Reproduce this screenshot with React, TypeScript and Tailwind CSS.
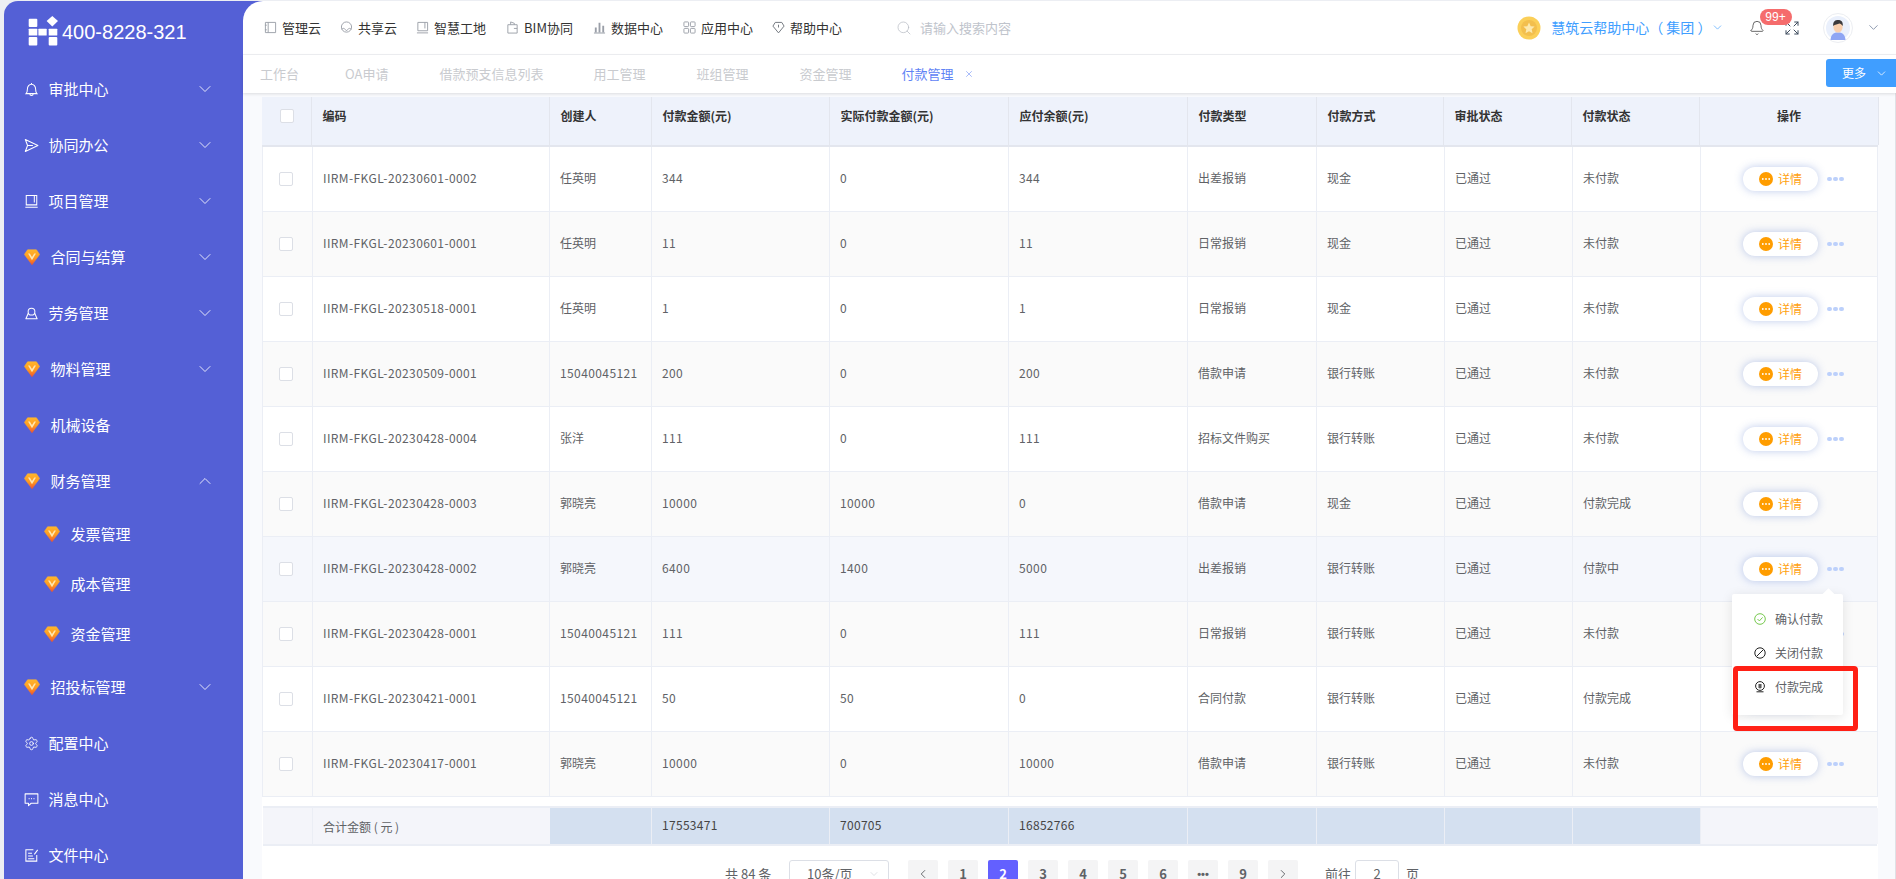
import React from "react";
import { ChevronDown, ChevronUp, ChevronLeft, ChevronRight, Search, Expand, Bell, Settings, X } from "lucide-react";

const BLUE = "bg-[#5460d6]";

function Gem() {
  return (
    <svg width="16" height="16" viewBox="0 0 16 16" className="shrink-0">
      <defs>
        <linearGradient id="gemg" x1="0" y1="0" x2="0" y2="1">
          <stop offset="0" stopColor="#ffb52b" />
          <stop offset="0.55" stopColor="#ff9a20" />
          <stop offset="1" stopColor="#f0542a" />
        </linearGradient>
      </defs>
      <path d="M3.6 .8 H12.4 L15.6 5.4 L8 15.8 L.4 5.4 Z" fill="url(#gemg)" stroke="url(#gemg)" strokeWidth="0.6" strokeLinejoin="round" />
      <path d="M4 4.4 L8 11.2 L12 4.4 L10.2 4.4 L8 8 L5.8 4.4 Z" fill="#ffe6b0" />
    </svg>
  );
}

function Logo() {
  return (
    <svg width="30" height="30" viewBox="0 0 30 30" className="shrink-0" fill="#fff">
      <rect x="0.7" y="2.7" width="8.6" height="8.3" rx="1" />
      <rect x="0.7" y="12.7" width="8.6" height="6.8" rx="0.6" />
      <rect x="0.7" y="21" width="8.6" height="8.4" rx="1" />
      <rect x="10.4" y="12.7" width="8.3" height="6.8" rx="0.6" />
      <rect x="20.7" y="12.7" width="8.6" height="6.8" rx="0.6" />
      <rect x="20.7" y="21" width="8.6" height="8.4" rx="1" />
      <path d="M24.3 0 L30 5 L24.3 10.4 L18.6 5 Z" />
    </svg>
  );
}

const si = { width: 15, height: 15, viewBox: "0 0 16 16", fill: "none", stroke: "#fff", strokeWidth: 1.1, className: "shrink-0" } as const;

const BellI = () => (
  <svg {...si}><path d="M2.2 12.4 H13.8 C12.6 11 12.4 9.8 12.4 7.6 C12.4 4.6 10.4 2.4 8 2.4 C5.6 2.4 3.6 4.6 3.6 7.6 C3.6 9.8 3.4 11 2.2 12.4 Z M8 1 V2.4 M6.2 12.6 C6.2 15 9.8 15 9.8 12.6" /></svg>
);
const SendI = () => (
  <svg {...si}><path d="M1.4 1.6 L14.8 8 L1.4 14.4 L3.8 8 Z M3.8 8 H9.5" strokeLinejoin="round" /></svg>
);
const BookI = () => (
  <svg {...si}><path d="M2.4 1.6 H13.6 V11.6 H2.4 Z M11 1.6 V9 M1.4 14.2 H14.6" /></svg>
);
const UserI = () => (
  <svg {...si}><circle cx="8" cy="6" r="3.6" /><path d="M4.6 7.8 L2 13.6 H14 L11.4 7.8" strokeLinejoin="round" /></svg>
);
const ChatI = () => (
  <svg {...si}><path d="M1.2 2 H14.8 V12 H7.6 L4.8 14.6 V12 H1.2 Z" strokeLinejoin="round" /><path d="M5 7 H5.9 M7.6 7 H8.5 M10.2 7 H11.1" strokeWidth="1.3" /></svg>
);
const EditI = () => (
  <svg {...si}><path d="M13.6 7.5 V14 H2 V1.8 H10 M4.4 5.6 H8.5 M4.4 8.6 H9.5 M4.4 11.4 H11 M11 6.8 L14.6 2" /></svg>
);

type MI = { label: string; icon: React.ReactNode; arrow?: "down" | "up"; sub?: boolean };

const menu: MI[] = [
  { label: "审批中心", icon: <BellI />, arrow: "down" },
  { label: "协同办公", icon: <SendI />, arrow: "down" },
  { label: "项目管理", icon: <BookI />, arrow: "down" },
  { label: "合同与结算", icon: <Gem />, arrow: "down" },
  { label: "劳务管理", icon: <UserI />, arrow: "down" },
  { label: "物料管理", icon: <Gem />, arrow: "down" },
  { label: "机械设备", icon: <Gem /> },
  { label: "财务管理", icon: <Gem />, arrow: "up" },
  { label: "发票管理", icon: <Gem />, sub: true },
  { label: "成本管理", icon: <Gem />, sub: true },
  { label: "资金管理", icon: <Gem />, sub: true },
  { label: "招投标管理", icon: <Gem />, arrow: "down" },
  { label: "配置中心", icon: <Settings size={15} strokeWidth={1.4} className="shrink-0 text-white" /> },
  { label: "消息中心", icon: <ChatI /> },
  { label: "文件中心", icon: <EditI /> },
];

function MenuItem({ m }: { m: MI }) {
  if (m.sub) {
    return (
      <div className="h-[50px] flex items-center pl-[39.5px] text-[15px] text-white">
        <Gem />
        <span className="ml-[11px]">{m.label}</span>
      </div>
    );
  }
  const isGem = m.icon && (m.icon as any).type === Gem;
  return (
    <div className="h-[56px] flex items-center pl-[19.5px] pr-[28px] text-[15px] text-white">
      <div className="w-[16px] flex justify-center">{m.icon}</div>
      <span className={isGem ? "ml-[11px]" : "ml-[9px]"}>{m.label}</span>
      <span className="ml-auto">
        {m.arrow === "down" && <ChevronDown size={20} strokeWidth={1} className="text-white" />}
        {m.arrow === "up" && <ChevronUp size={20} strokeWidth={1} className="text-white" />}
      </span>
    </div>
  );
}

const ni = { width: 13, height: 13, viewBox: "0 0 14 14", fill: "none", stroke: "#9a9fa8", strokeWidth: 1, className: "shrink-0" } as const;

const navs: { label: string; icon: React.ReactNode; ml: string }[] = [
  { label: "管理云", ml: "ml-[21px]", icon: <svg {...ni}><path d="M1.5 1.5 H12.5 V12.5 H1.5 Z M4.5 1.5 V12.5 M1 4.5 H3 M1 9.5 H3" /></svg> },
  { label: "共享云", ml: "ml-[19px]", icon: <svg {...ni}><circle cx="7" cy="6.5" r="5.5" /><path d="M2 9 C3 7 5 8 7 10.5 C9 8 11 7 12 9" /></svg> },
  { label: "智慧工地", ml: "ml-[19px]", icon: <svg {...ni}><path d="M2 1.5 H12.5 V10.5 H2 Z M9.6 1.5 V8 M1 12.8 H13" /></svg> },
  { label: "BIM协同", ml: "ml-[20px]", icon: <svg {...ni}><path d="M2 4 H12 V13 H2 Z M5 4 V1 L9 2.5 V4 M8.5 8 H12" /></svg> },
  { label: "数据中心", ml: "ml-[20px]", icon: <svg {...ni} fill="#9a9fa8" stroke="none"><path d="M2 7 H4 V12 H2 Z M6 2 H8 V12 H6 Z M10 5 H12 V12 H10 Z M1 12.5 H13 V13.4 H1 Z" /></svg> },
  { label: "应用中心", ml: "ml-[20px]", icon: <svg {...ni}><rect x="1" y="1" width="5" height="5" rx="0.8" /><rect x="8" y="1" width="5" height="5" rx="0.8" /><rect x="1" y="8" width="5" height="5" rx="0.8" /><rect x="8" y="8" width="5" height="5" rx="0.8" /></svg> },
  { label: "帮助中心", ml: "ml-[19px]", icon: <svg {...ni} stroke="#6b7078"><path d="M3.5 1.5 H10.5 L13 5.5 L7 12.8 L1 5.5 Z M7 4 L7 7" /></svg> },
];

const tabs = [
  { t: "工作台", ml: "ml-[17px]" },
  { t: "OA申请", ml: "ml-[46px]" },
  { t: "借款预支信息列表", ml: "ml-[51px]" },
  { t: "用工管理", ml: "ml-[50px]" },
  { t: "班组管理", ml: "ml-[51px]" },
  { t: "资金管理", ml: "ml-[51px]" },
];

const headW = "grid grid-cols-[50px_238px_102px_178px_179px_179px_129px_127px_128px_128px_179px]";
const bodyW = "grid grid-cols-[50px_237px_102px_178px_179px_179px_129px_128px_128px_128px_177px]";

const heads = ["编码", "创建人", "付款金额(元)", "实际付款金额(元)", "应付余额(元)", "付款类型", "付款方式", "审批状态", "付款状态"];

const rows = [
  ["IIRM-FKGL-20230601-0002", "任英明", "344", "0", "344", "出差报销", "现金", "已通过", "未付款", "1"],
  ["IIRM-FKGL-20230601-0001", "任英明", "11", "0", "11", "日常报销", "现金", "已通过", "未付款", "1"],
  ["IIRM-FKGL-20230518-0001", "任英明", "1", "0", "1", "日常报销", "现金", "已通过", "未付款", "1"],
  ["IIRM-FKGL-20230509-0001", "15040045121", "200", "0", "200", "借款申请", "银行转账", "已通过", "未付款", "1"],
  ["IIRM-FKGL-20230428-0004", "张洋", "111", "0", "111", "招标文件购买", "银行转账", "已通过", "未付款", "1"],
  ["IIRM-FKGL-20230428-0003", "郭晓亮", "10000", "10000", "0", "借款申请", "现金", "已通过", "付款完成", "0"],
  ["IIRM-FKGL-20230428-0002", "郭晓亮", "6400", "1400", "5000", "出差报销", "银行转账", "已通过", "付款中", "1"],
  ["IIRM-FKGL-20230428-0001", "15040045121", "111", "0", "111", "日常报销", "银行转账", "已通过", "未付款", "1"],
  ["IIRM-FKGL-20230421-0001", "15040045121", "50", "50", "0", "合同付款", "银行转账", "已通过", "付款完成", "0"],
  ["IIRM-FKGL-20230417-0001", "郭晓亮", "10000", "0", "10000", "借款申请", "银行转账", "已通过", "未付款", "1"],
];

const rowBg = ["bg-white", "bg-[#fafafa]", "bg-white", "bg-[#fafafa]", "bg-white", "bg-[#fafafa]", "bg-[#f5f7fc]", "bg-[#fafafa]", "bg-white", "bg-[#fafafa]"];

function Check() {
  return <span className="block w-[14px] h-[14px] rounded-[2px] border border-[#dcdfe6] bg-white" />;
}

function Dots() {
  return (
    <span className="flex gap-[1.5px] ml-[9px]">
      <i className="block w-[4.5px] h-[4.5px] rounded-full bg-[#bcd0fb]" />
      <i className="block w-[4.5px] h-[4.5px] rounded-full bg-[#bcd0fb]" />
      <i className="block w-[4.5px] h-[4.5px] rounded-full bg-[#bcd0fb]" />
    </span>
  );
}

function Detail() {
  return (
    <span className="flex items-center justify-center w-[75px] h-[24px] rounded-full bg-white shadow-[0_0_8px_rgba(70,105,200,0.35)] text-[12px] text-[#ff9f0f]">
      <svg width="14" height="14" viewBox="0 0 14 14" className="shrink-0">
        <circle cx="7" cy="7" r="7" fill="#ff9d00" />
        <circle cx="3.8" cy="7" r="0.9" fill="#fff" />
        <circle cx="7" cy="7" r="0.9" fill="#fff" />
        <circle cx="10.2" cy="7" r="0.9" fill="#fff" />
      </svg>
      <span className="ml-[5px]">详情</span>
    </span>
  );
}

const pages = ["1", "2", "3", "4", "5", "6", "•••", "9"];
const isLatin = (s: string) => /^[\x00-\x7f]+$/.test(s);

export default function App() {
  return (
    <div className="relative w-[1896px] h-[879px] overflow-hidden flex pt-px bg-[#eceef3] font-['Noto_Sans_CJK_SC','Noto_Sans',sans-serif]">
      {/* sidebar */}
      <aside className={`ml-[4px] w-[239px] shrink-0 rounded-tl-[14px] ${BLUE}`}>
        <div className="h-[60px] flex items-center pl-[24px]">
          <Logo />
          <span className="ml-[4px] mt-[2px] text-[20px] text-white font-['Liberation_Sans',sans-serif]">400-8228-321</span>
        </div>
        {menu.map((m) => (
          <MenuItem key={m.label} m={m} />
        ))}
      </aside>

      {/* main */}
      <div className="flex-1 min-w-0 flex flex-col">
        <div className={BLUE}>
          <header className="h-[54px] bg-white rounded-tl-[20px] border-b border-[#f0f1f4] flex items-center text-[13px] text-[#333]">
            {navs.map((n) => (
              <div key={n.label} className={`flex items-center ${n.ml}`}>
                {n.icon}
                <span className="ml-[5px]">{n.label}</span>
              </div>
            ))}
            <Search size={16} strokeWidth={1.1} className="ml-[54px] text-[#b8bcc4]" />
            <span className="ml-[8px] text-[#c0c4cc]">请输入搜索内容</span>
            <svg width="24" height="24" viewBox="0 0 24 24" className="ml-auto shrink-0">
              <circle cx="12" cy="12" r="11.5" fill="#fbcf58" />
              <circle cx="12" cy="12" r="8" fill="#f3bf4d" />
              <path d="M12 6.5 L13.7 10.2 L17.6 10.6 L14.7 13.2 L15.5 17.2 L12 15.2 L8.5 17.2 L9.3 13.2 L6.4 10.6 L10.3 10.2 Z" fill="#fde9ad" />
            </svg>
            <span className="ml-[10px] text-[14px] text-[#409eff]">慧筑云帮助中心（ 集团 ）</span>
            <ChevronDown size={13} strokeWidth={1.2} className="ml-[-1px] text-[#409eff]" />
            <Bell size={16} strokeWidth={1.1} className="ml-[25px] text-[#333]" />
            <span className="relative ml-[19px]">
              <Expand size={16} strokeWidth={1.5} className="text-[#3d4a5c]" />
              <span className="absolute left-[-24px] top-[-11px] w-[32px] h-[16px] rounded-full bg-[#f56c6c] text-white text-[12px] leading-[16px] text-center font-['Liberation_Sans',sans-serif]">99+</span>
            </span>
            <span className="ml-[23.5px] w-[30px] h-[30px] rounded-full border border-[#eceef2] bg-white flex items-center justify-center shrink-0">
              <svg width="24" height="24" viewBox="0 0 24 24">
                <circle cx="12" cy="12" r="12" fill="#eaf0fc" />
                <path d="M4.5 24 C5 18 8 16.5 12 16.5 C16 16.5 19 18 19.5 24 Z" fill="#8ea5f4" />
                <ellipse cx="12" cy="11" rx="4.6" ry="5.6" fill="#f9cfae" />
                <path d="M7.2 10 C6.8 5 9.5 4 12 4 C15 4 17.2 5.5 16.8 10 C15.5 8.5 14.5 8 13.5 7.6 C11.5 8.6 9 8.6 7.2 10 Z" fill="#3b3a3d" />
              </svg>
            </span>
            <ChevronDown size={15} strokeWidth={1.2} className="ml-[13px] mr-[15px] text-[#6a7a96]" />
          </header>
        </div>

        <nav className="relative z-10 h-[38px] bg-white shadow-[0_1px_3px_rgba(0,0,0,0.12)] flex items-center text-[13px] text-[#c9cbcf]">
          {tabs.map((t) => (
            <span key={t.t} className={`${t.ml} pb-[1px]`}>{t.t}</span>
          ))}
          <span className="ml-[50px] pb-[1px] text-[#5f83f5]">付款管理</span>
          <X size={10} strokeWidth={1.3} className="ml-[10px] text-[#5f83f5]" />
          <div className="ml-auto w-[70px] h-[28px] rounded-l-[3px] bg-[#409eff] text-white text-[12px] flex items-center pl-[16px] self-start mt-[4px]">
            <span>更多</span>
            <ChevronDown size={13} strokeWidth={1.4} className="ml-[9px]" />
          </div>
        </nav>

        <main className="flex-1 min-h-0 bg-[#f9fafd] pl-[19px] pr-[17px] pt-[4px] border-r border-[#dfe1e6]">
          <div className="bg-white h-full text-[12px] text-[#606266]">
            <div className={`${headW} h-[50px] bg-[#eef2fb] border-b-2 border-[#e3e6ee] font-bold text-[#333]`}>
              <div className="flex items-center justify-center border-r border-[#e3e6ee] pl-px pb-[10px]"><Check /></div>
              {heads.map((h) => (
                <div key={h} className="flex items-center pl-[10.5px] pb-[10px] border-r border-[#e3e6ee]">{h}</div>
              ))}
              <div className="flex items-center justify-center pb-[10px] border-r border-[#e3e6ee]">操作</div>
            </div>

            <div className="border-x border-[#ebeef5]">
              {rows.map((r, i) => (
                <div key={r[0]} className={`${bodyW} h-[65px] border-b border-[#ebeef5] ${rowBg[i]}`}>
                  <div className="flex items-center justify-center border-r border-[#ebeef5] pr-[3px]"><Check /></div>
                  {r.slice(0, 9).map((c, j) => (
                    <div key={j} className={`flex items-center pl-[10px] pb-[2px] border-r border-[#ebeef5] ${isLatin(c) ? "tracking-[0.4px]" : ""}`}>{c}</div>
                  ))}
                  <div className="flex items-center pl-[42px]">
                    <Detail />
                    {r[9] === "1" && <Dots />}
                  </div>
                </div>
              ))}
            </div>

            <div className={`${bodyW} mt-[9px] mx-px h-[40px] border-y-2 border-[#ebeef5] text-[#444] tracking-[0.3px]`}>
              <div className="bg-[#f4f5fa] border-r border-[#ebeef5]" />
              <div className="bg-[#f4f5fa] flex items-center pl-[10px] pt-[2px] tracking-normal text-[#606266]">合计金额 ( 元 )</div>
              <div className="bg-[#d4e0f0] border-r border-[#ebeef5]" />
              <div className="bg-[#d4e0f0] border-r border-[#ebeef5] flex items-center pl-[10px] pb-[2px]">17553471</div>
              <div className="bg-[#d4e0f0] border-r border-[#ebeef5] flex items-center pl-[10px] pb-[2px]">700705</div>
              <div className="bg-[#d4e0f0] border-r border-[#ebeef5] flex items-center pl-[10px] pb-[2px]">16852766</div>
              <div className="bg-[#d4e0f0] border-r border-[#ebeef5]" />
              <div className="bg-[#d4e0f0] border-r border-[#ebeef5]" />
              <div className="bg-[#d4e0f0] border-r border-[#ebeef5]" />
              <div className="bg-[#d4e0f0] border-r border-[#ebeef5]" />
              <div className="bg-[#f4f5fa]" />
            </div>

            <div className="flex items-start mt-[14px] ml-[463px] text-[13px] text-[#606266]">
              <span className="w-[50px] leading-[28px] mr-[14px] whitespace-nowrap">共 84 条</span>
              <div className="w-[100px] h-[28px] rounded-[3px] border border-[#dcdfe6] flex items-center pl-[17px] pr-[8px] mr-[19px]">
                <span>10条/页</span>
                <ChevronDown size={12} strokeWidth={1} className="ml-auto text-[#c0c4cc]" />
              </div>
              <span className="w-[30px] h-[28px] rounded-[2px] bg-[#f4f4f5] flex items-center justify-center mr-[10px]"><ChevronLeft size={14} strokeWidth={1.6} /></span>
              {pages.map((p) => (
                <span key={p} className={`w-[30px] h-[28px] rounded-[2px] flex items-center justify-center mr-[10px] font-bold ${p === "2" ? "bg-[#6360ff] text-white" : "bg-[#f4f4f5]"} ${p === "•••" ? "text-[11px] font-['Liberation_Sans',sans-serif]" : ""}`}>{p}</span>
              ))}
              <span className="w-[30px] h-[28px] rounded-[2px] bg-[#f4f4f5] flex items-center justify-center"><ChevronRight size={14} strokeWidth={1.6} /></span>
              <span className="ml-[27px] leading-[28px]">前往</span>
              <span className="ml-[4px] w-[44px] h-[28px] rounded-[3px] border border-[#dcdfe6] flex items-center justify-center">2</span>
              <span className="ml-[7px] leading-[28px]">页</span>
            </div>
          </div>
        </main>
      </div>

      {/* popover */}
      <div className="absolute left-[1732px] top-[594px] w-[111px] h-[121px] bg-white rounded-[2px] shadow-[0_2px_12px_rgba(0,0,0,0.1)] text-[12px] text-[#606266] pt-[8px]">
        <span className="absolute left-[92px] top-[-4px] w-[9px] h-[9px] rotate-45 bg-white" />
        <div className="h-[34px] flex items-center pl-[22px]">
          <svg width="12" height="12" viewBox="0 0 12 12" fill="none" stroke="#67c23a" strokeWidth="0.9">
            <circle cx="6" cy="6" r="5.3" />
            <path d="M3.5 6 L5.4 7.9 L8.6 4.4" />
          </svg>
          <span className="ml-[9px]">确认付款</span>
        </div>
        <div className="h-[34px] flex items-center pl-[22px]">
          <svg width="12" height="12" viewBox="0 0 12 12" fill="none" stroke="#222" strokeWidth="1">
            <circle cx="6" cy="6" r="5.2" />
            <path d="M2.6 9.4 L9.4 2.6" />
          </svg>
          <span className="ml-[9px]">关闭付款</span>
        </div>
        <div className="h-[34px] flex items-center pl-[22px]">
          <svg width="12" height="12" viewBox="0 0 12 12" fill="none" stroke="#222" strokeWidth="1">
            <circle cx="6" cy="5" r="4.4" />
            <path d="M4.2 4 L7.8 4 M4.2 6 L7.8 6 M6 3 V7.5 M2.5 10.8 H9.5" />
          </svg>
          <span className="ml-[9px]">付款完成</span>
        </div>
      </div>

      {/* red annotation */}
      <div className="absolute left-[1733px] top-[666px] w-[125px] h-[65px] border-[5px] border-[#ff2015] rounded-[4px]" />
    </div>
  );
}
